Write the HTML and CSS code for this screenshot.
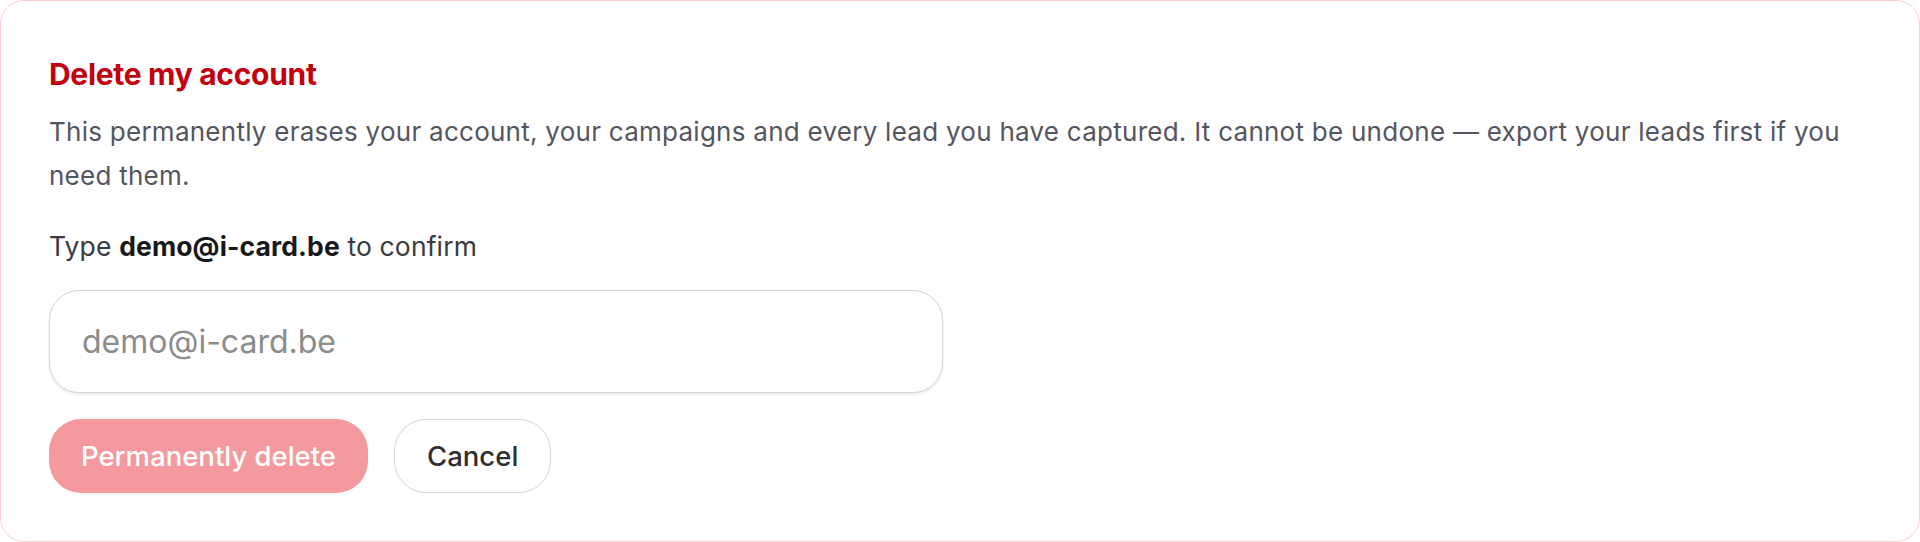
FILE: index.html
```html
<!DOCTYPE html>
<html lang="en">
<head>
<meta charset="utf-8">
<title>Delete my account</title>
<link rel="stylesheet" href="styles.css">
</head>
<body>
<section class="card">
  <h2 class="title">Delete my account</h2>
  <p class="desc">This permanently erases your account, your campaigns and every lead you have captured. It cannot be undone — export your leads first if you need them.</p>
  <label class="label" for="confirm">Type <strong>demo@i-card.be</strong> to confirm</label>
  <input class="input" id="confirm" type="email" placeholder="demo@i-card.be">
  <div class="actions">
    <button class="btn btn-danger" type="button" disabled>Permanently delete</button>
    <button class="btn btn-ghost" type="button">Cancel</button>
  </div>
</section>
</body>
</html>
```
FILE: styles.css
```css
html, body {
  margin: 0;
  padding: 0;
  background: #ffffff;
}
body {
  font-family: Inter, "Noto Sans", sans-serif;
}
.card {
  box-sizing: border-box;
  width: 1920px;
  height: 542px;
  border: 1.5px solid #fdcfcf;
  border-radius: 24px;
  background: #fff;
  padding: 54px 48px 48px 48px;
  display: flex;
  flex-direction: column;
  align-items: flex-start;
}
.title {
  margin: 0;
  font-size: 30px;
  line-height: 38px;
  font-weight: 700;
  letter-spacing: -0.01em;
  color: #c3000d;
}
.desc {
  margin: 17px 0 0 0;
  font-size: 26px;
  line-height: 44px;
  letter-spacing: 0.01em;
  color: #55555f;
  max-width: 1800px;
}
.label {
  margin-top: 30px;
  font-size: 26.5px;
  line-height: 36px;
  letter-spacing: 0.005em;
  color: #3a3a40;
}
.label strong {
  font-weight: 700;
  color: #18181b;
}
.input {
  box-sizing: border-box;
  margin-top: 26px;
  width: 894px;
  height: 104px;
  padding: 0 32px;
  border: 1.5px solid #d4d4d8;
  border-radius: 30px;
  box-shadow: 0 2px 3px rgba(0,0,0,0.08);
  font-family: Inter, "Noto Sans", sans-serif;
  font-size: 32px;
  color: #18181b;
  background: #fff;
  outline: none;
}
.input::placeholder {
  color: #8c8c8c;
}
.actions {
  margin-top: 26px;
  display: flex;
  gap: 26px;
}
.btn {
  box-sizing: border-box;
  height: 74px;
  padding: 0 32px;
  border-radius: 32px;
  font-family: Inter, "Noto Sans", sans-serif;
  font-size: 27.5px;
  font-weight: 500;
  cursor: pointer;
}
.btn-danger {
  background: #f4999d;
  border: none;
  color: #ffffff;
}
.btn-ghost {
  background: #ffffff;
  border: 1.5px solid #d4d4d8;
  color: #2e2e33;
}
```
